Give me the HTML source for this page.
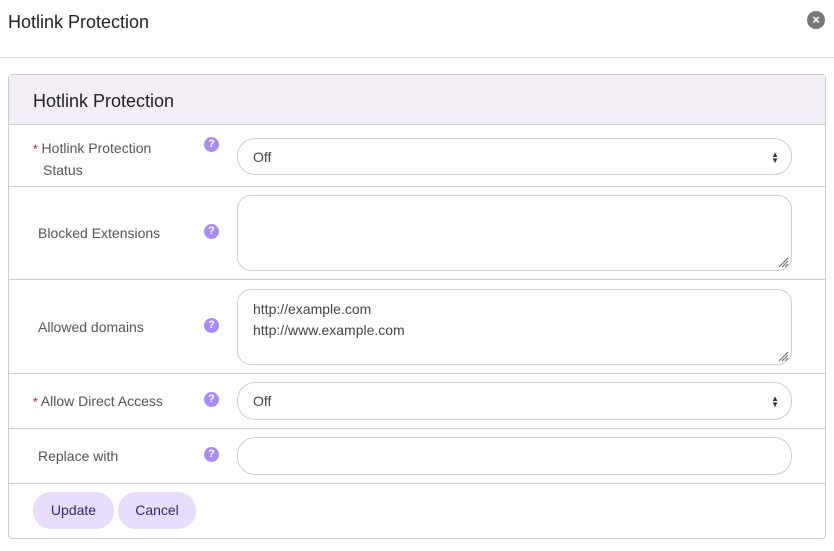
<!DOCTYPE html>
<html><head><style>
*{box-sizing:border-box;margin:0;padding:0}
body{width:834px;height:551px;background:#fff;font-family:"Liberation Sans",sans-serif;position:relative;overflow:hidden;color:#555}
.abs{position:absolute}
.title{left:8px;top:12px;font-size:18px;color:#222}
.close{left:807px;top:11px;width:18px;height:18px;border-radius:50%;background:#777;color:#fff;font-size:13px;font-weight:bold;text-align:center;line-height:18px}
.hr{left:0;top:57px;width:834px;height:1px;background:#ddd}
.card{left:8px;top:74px;width:818px;height:465px;border:1px solid #ccc;border-radius:4px}
.head{left:9px;top:75px;width:816px;height:50px;background:#f3eef6;border-bottom:1px solid #ccc}
.head span{position:absolute;left:24px;top:16px;font-size:18px;color:#222}
.line{left:9px;width:816px;height:1px;background:#ccc}
.lbl{font-size:14px;color:#555}
.req{color:#c00;font-size:12px}
.q{width:15px;height:15px;border-radius:50%;background:#a98bf2;color:#fff;font-size:11px;font-weight:bold;text-align:center;line-height:15px;left:204px}
.inp{left:237px;width:555px;border:1px solid #ccc;border-radius:18px;font-size:14px;color:#444;padding-left:15px}
.arr{position:absolute;right:12px;font-size:8px;line-height:6px;color:#333}
.btn{top:492px;height:37px;border-radius:18px;background:#e9ddfd;color:#3b2470;font-size:14px;text-align:center;line-height:37px}
.grip{position:absolute;right:2px;bottom:2px}
</style></head><body>
<div class="abs title">Hotlink Protection</div>
<div class="abs close">×</div>
<div class="abs hr"></div>
<div class="abs card"></div>
<div class="abs head"><span>Hotlink Protection</span></div>

<div class="abs lbl" style="left:33px;top:138px;line-height:21px"><span class="req">*</span> Hotlink Protection<br><span style="padding-left:10px">Status</span></div>
<div class="abs q" style="top:137px">?</div>
<div class="abs inp" style="top:138px;height:37px;line-height:37px">Off<span class="arr" style="top:13px">▲<br>▼</span></div>
<div class="abs line" style="top:186px"></div>

<div class="abs lbl" style="left:38px;top:225px">Blocked Extensions</div>
<div class="abs q" style="top:224px">?</div>
<div class="abs inp" style="top:195px;height:76px;border-radius:14px"><svg class="grip" width="12" height="12"><path d="M2 11L11 2M5 11L11 5M8 11L11 8" stroke="#666" stroke-width="1"/></svg></div>
<div class="abs line" style="top:279px"></div>

<div class="abs lbl" style="left:38px;top:319px">Allowed domains</div>
<div class="abs q" style="top:318px">?</div>
<div class="abs inp" style="top:289px;height:76px;border-radius:14px;padding-top:9px;line-height:21px">http://example.com<br>http://www.example.com<svg class="grip" width="12" height="12"><path d="M2 11L11 2M5 11L11 5M8 11L11 8" stroke="#666" stroke-width="1"/></svg></div>
<div class="abs line" style="top:373px"></div>

<div class="abs lbl" style="left:33px;top:393px"><span class="req">*</span> Allow Direct Access</div>
<div class="abs q" style="top:392px">?</div>
<div class="abs inp" style="top:382px;height:38px;line-height:37px">Off<span class="arr" style="top:13px">▲<br>▼</span></div>
<div class="abs line" style="top:428px"></div>

<div class="abs lbl" style="left:38px;top:448px">Replace with</div>
<div class="abs q" style="top:447px">?</div>
<div class="abs inp" style="top:437px;height:38px"></div>
<div class="abs line" style="top:483px"></div>

<div class="abs btn" style="left:33px;width:81px">Update</div>
<div class="abs btn" style="left:118px;width:78px">Cancel</div>
</body></html>
